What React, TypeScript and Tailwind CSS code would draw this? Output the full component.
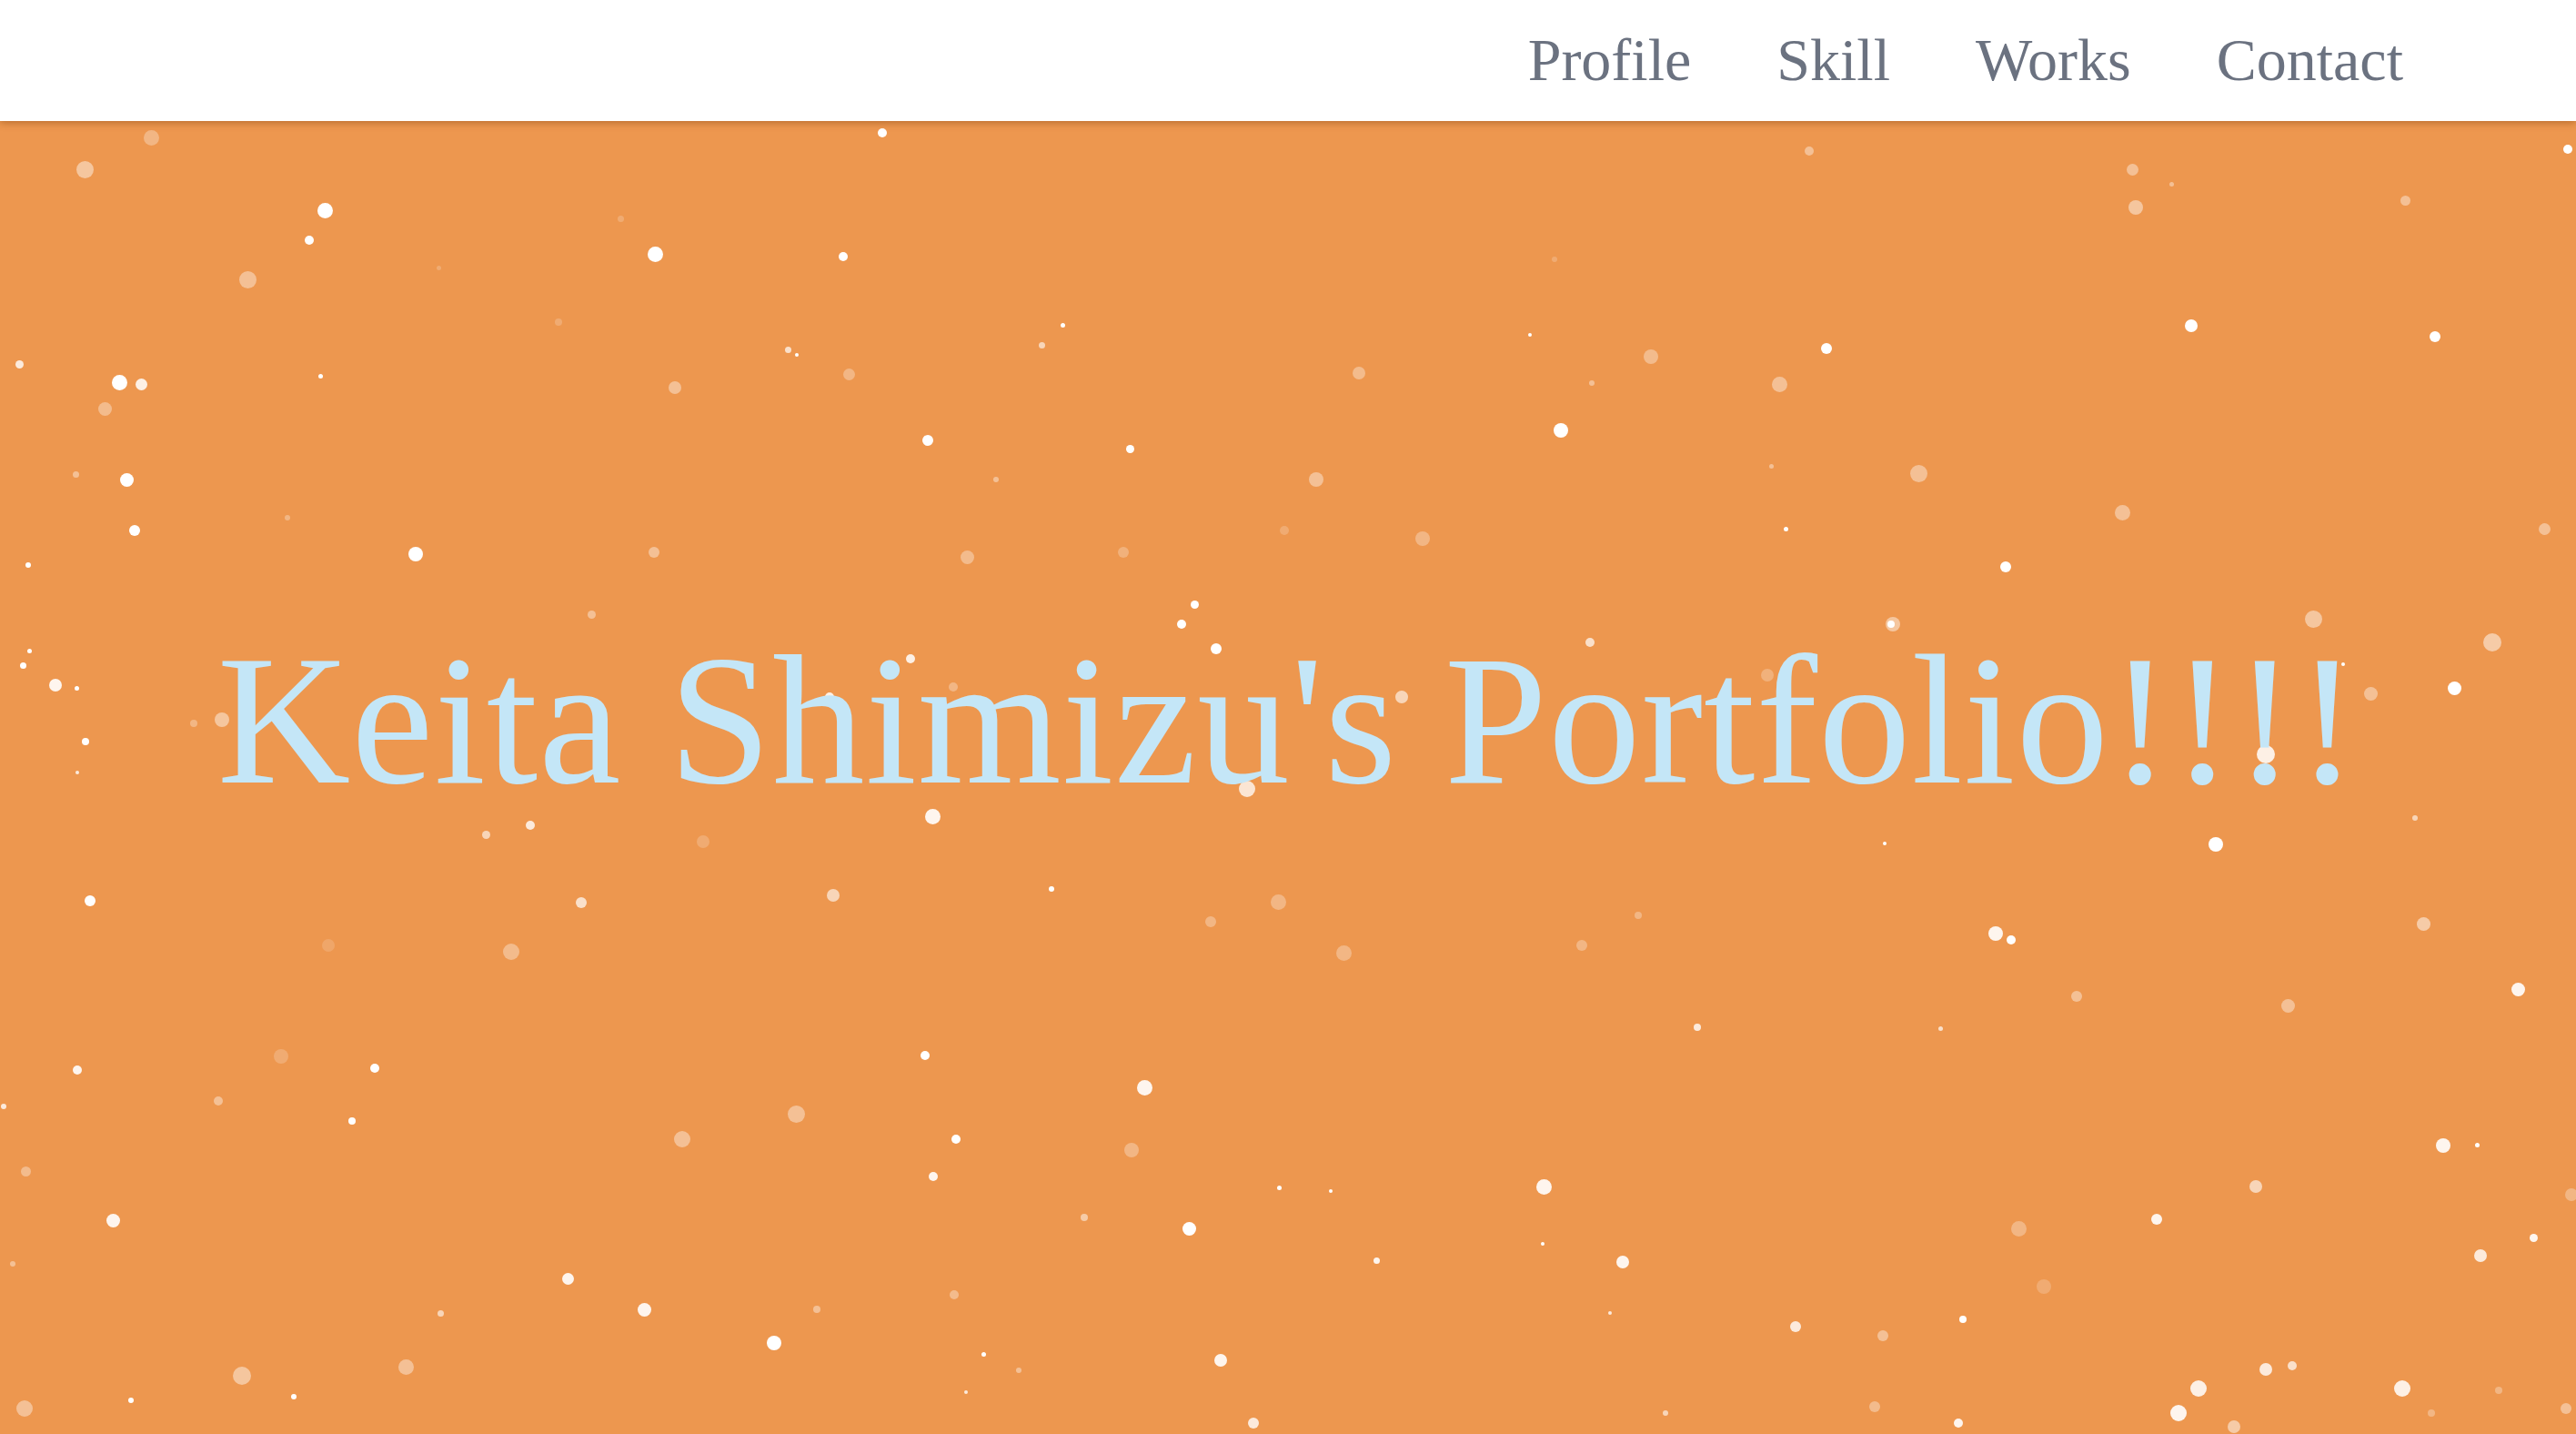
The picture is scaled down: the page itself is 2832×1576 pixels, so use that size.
import React from "react";

const S = 2832 / 1568;

// [x, y] in 1568-wide coords, size in px, opacity
const DOTS: [number, number, number, number][] = [
  [537,81,10,1],[198,128,17,1],[188,146,10,1],[399,155,17,1],[513,156,10,1],[73,233,17,1],[86,234,13,0.85],[77,292,15,1],[82,323,12,1],[12,222,9,0.8],[253,337,16,1],[565,268,12,1],[688,273,9,1],[950,262,16,1],[1112,212,12,1],[1334,198,14,1],[1482,205,12,1],[1563,91,10,1],[1221,345,12,1],[727,368,9,1],[719,380,10,1],[740,395,12,1],[1494,419,15,1],[1349,514,16,1],[1215,568,16,0.9],[1224,572,10,1],[568,497,17,0.9],[640,541,6,1],[55,548,12,1],[228,650,10,1],[563,642,10,1],[697,662,17,0.9],[582,693,10,1],[568,716,10,0.9],[940,722,17,0.9],[724,748,15,1],[988,768,14,0.9],[392,797,15,0.9],[471,817,16,1],[743,828,14,0.9],[1195,803,8,1],[1093,807,12,0.8],[1313,742,12,0.9],[1487,697,16,0.9],[1533,602,15,0.9],[1510,764,14,0.8],[1338,845,18,0.85],[1326,860,18,0.9],[1462,845,18,0.85],[1379,833,14,0.8],[1395,831,10,0.7],[34,417,14,0.9],[17,344,6,1],[14,405,7,1],[52,451,8,1],[69,743,15,0.9],[47,651,10,0.9],[214,682,8,1],[346,778,13,0.9],[1087,322,5,1],[931,204,4,1],[1147,513,4,1],[1033,625,8,0.8],[810,725,4,1],[779,723,5,1],[838,767,7,0.9],[1508,697,5,1],[1542,753,9,0.9],[1426,404,4,1],[18,396,5,1],[47,419,5,1],[47,470,4,0.8],[195,229,5,1],[485,216,4,1],[647,198,5,1],[1470,498,6,0.6],[980,799,4,0.8],[939,757,4,1],[1181,626,5,0.7],[80,852,6,1],[179,850,6,1],[599,824,5,1],[588,847,4,0.8],[1014,860,6,0.6],[1192,866,10,0.9],[763,866,12,0.8],
  [759,480,18,0.75],[1379,459,20,0.85],[1151,380,8,1],[968,391,10,0.7],[853,424,14,0.6],[505,424,10,0.85],[554,401,10,0.85],
  [52,103,19,0.45],[92,84,17,0.3],[151,170,19,0.4],[411,236,14,0.4],[517,228,13,0.3],[589,339,15,0.35],[801,292,16,0.4],[827,227,14,0.35],[866,328,16,0.3],[1005,217,16,0.35],[1083,234,17,0.4],[1168,288,19,0.4],[1292,312,17,0.4],[1300,126,16,0.45],[1298,103,13,0.4],[1408,377,19,0.45],[1517,391,20,0.5],[1549,322,13,0.4],[1443,422,15,0.4],[1475,562,15,0.5],[1393,612,15,0.4],[1264,606,12,0.4],[1373,722,14,0.6],[1565,727,14,0.3],[1229,748,17,0.3],[1244,783,16,0.2],[1146,813,12,0.4],[1141,856,12,0.35],[963,575,12,0.3],[997,557,8,0.3],[818,580,17,0.3],[778,549,17,0.3],[737,561,12,0.3],[689,700,16,0.3],[660,741,8,0.5],[620,834,6,0.4],[581,788,10,0.35],[497,797,8,0.4],[485,678,19,0.4],[415,693,18,0.4],[311,579,18,0.35],[171,643,16,0.2],[133,670,10,0.4],[16,713,11,0.35],[8,769,6,0.4],[147,837,20,0.45],[247,832,17,0.4],[268,799,7,0.6],[15,857,18,0.4],[2,673,6,0.8],[200,575,14,0.15],[354,549,12,0.7],[507,545,14,0.6],[323,502,10,0.8],[296,508,9,0.6],[428,512,14,0.2],[135,438,16,0.45],[118,440,8,0.3],[46,289,7,0.4],[64,249,15,0.35],[175,315,6,0.3],[360,374,9,0.4],[398,336,12,0.4],[480,213,7,0.7],[606,292,6,0.4],[634,210,7,0.6],[684,336,12,0.25],[782,323,10,0.2],[946,158,6,0.2],[969,233,6,0.4],[1101,92,10,0.4],[1322,112,5,0.4],[1464,122,11,0.4],[1076,411,14,0.25],[1152,380,16,0.45],[1360,868,14,0.5],[1562,857,12,0.4],[378,133,7,0.2],[340,196,8,0.2],[267,163,5,0.2],[1078,284,5,0.4],[1521,846,8,0.3],[1480,860,8,0.3],[580,418,10,0.3],
];

export default function App() {
  return (
    <div className="min-h-screen w-full bg-[#ED974F] font-['Liberation_Serif','Times_New_Roman',serif]">
      <header className="fixed top-0 left-0 right-0 z-20 h-[133px] bg-white shadow-[0_2px_8px_rgba(120,60,10,0.45)] flex items-center justify-end pr-[190px] pb-[2px]">
        <nav className="flex items-center gap-[94px] text-[66px] leading-none text-[#6B7280]">
          <a href="#profile">Profile</a>
          <a href="#skill">Skill</a>
          <a href="#works">Works</a>
          <a href="#contact">Contact</a>
        </nav>
      </header>
      <main className="relative h-[1576px] overflow-hidden flex items-center justify-center pt-[6px]">
        {DOTS.map(([x, y, s, o], i) => (
          <span
            key={i}
            className="absolute rounded-full bg-white"
            style={{ left: x * S - s / 2, top: y * S - s / 2, width: s, height: s, opacity: o }}
          />
        ))}
        <h1 className="relative z-10 text-[203px] leading-none text-[#C4E6F7] tracking-[1px] whitespace-nowrap">
          Keita Shimizu's Portfolio!!!!
        </h1>
      </main>
    </div>
  );
}
